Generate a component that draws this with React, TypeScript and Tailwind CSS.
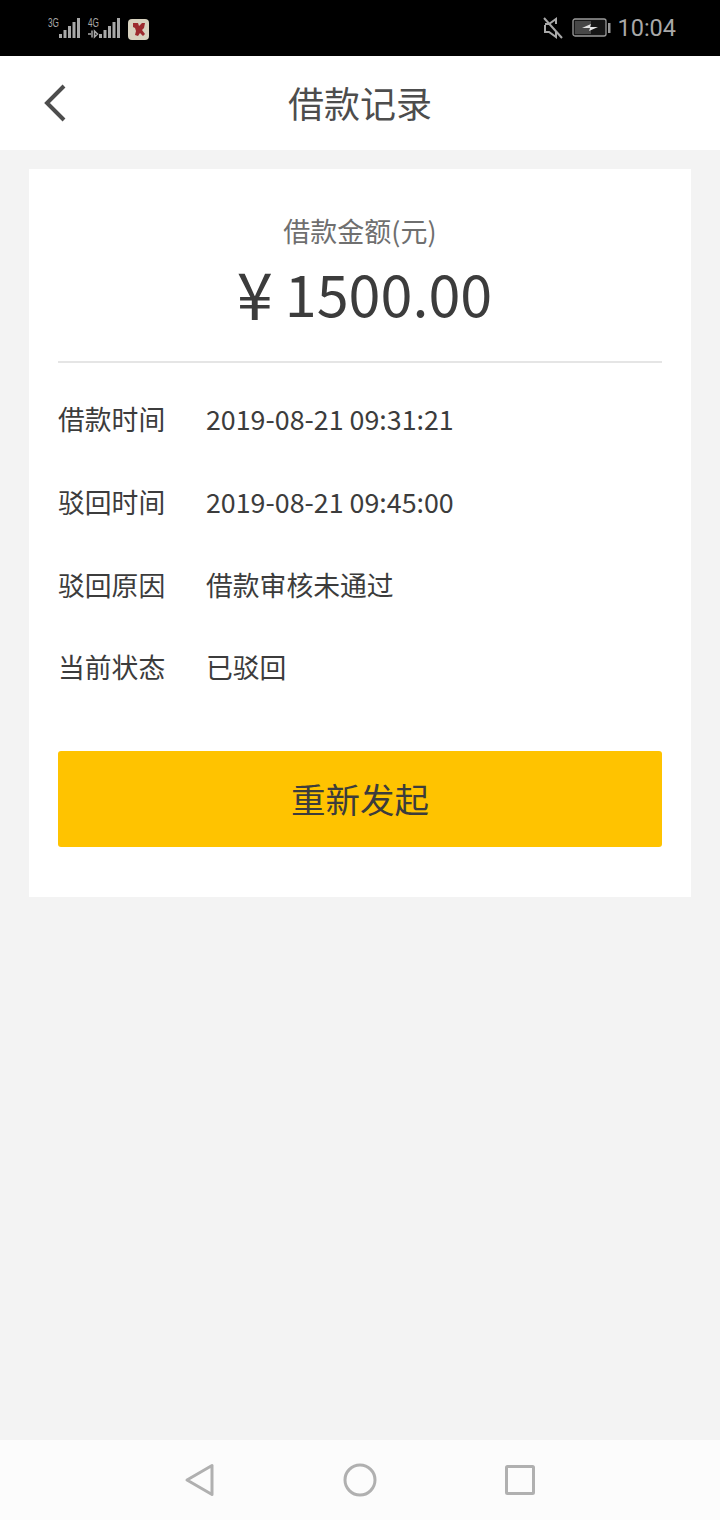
import React from "react";

const cjk = { fontFamily: '"Noto Sans CJK SC", "Noto Sans", sans-serif' };

function Bars({ x }: { x: number }) {
  const hs = [4, 8, 12, 16, 20];
  return (
    <>
      {hs.map((h, i) => (
        <rect key={i} x={x + i * 4.5} y={38 - h} width="3" height={h} fill="#a8a8a8" />
      ))}
    </>
  );
}

function Row({ label, value }: { label: string; value: string }) {
  return (
    <div className="flex h-[82.6px] items-center text-[26.8px] leading-none text-[#3c3c3c]">
      <span className="w-[148px] shrink-0">{label}</span>
      <span>{value}</span>
    </div>
  );
}

export default function App() {
  return (
    <div className="flex h-[1520px] w-[720px] flex-col overflow-hidden bg-[#f3f3f3]" style={cjk}>
      <div className="flex h-[56px] shrink-0 items-center justify-between bg-black pl-[47px] pr-[44px]">
        <svg width="104" height="56" viewBox="47 0 104 56" className="shrink-0">
          <text x="48" y="27" fontSize="12" fill="#a8a8a8" fontFamily="Liberation Sans" textLength="11" lengthAdjust="spacingAndGlyphs">3G</text>
          <Bars x={59} />
          <text x="88" y="27" fontSize="12" fill="#a8a8a8" fontFamily="Liberation Sans" textLength="11" lengthAdjust="spacingAndGlyphs">4G</text>
          <path d="M88 34h3M92 30.500v7M94.500 31v6l3-3z" stroke="#a8a8a8" strokeWidth="1.500" fill="none" />
          <Bars x={99} />
          <rect x="128" y="19" width="21" height="21" rx="4" fill="#d8d2bf" />
          <path d="M133 23h5l1 3 3-3h3l-1 5-2 2 3 4-2 2-3-3-2 3-3-1 1-4-1-3-2-1z" fill="#9c2b2e" />
        </svg>
        <div className="flex items-center">
          <svg width="20" height="22" viewBox="0 0 20 22" className="mr-[9px] shrink-0" fill="none" stroke="#a8a8a8" strokeWidth="2">
            <path d="M1 1l18 20" />
            <path d="M2 7h4l7-5v5M13 14v6l-7-5H2V8" />
          </svg>
          <svg width="40" height="20" viewBox="0 0 40 20" className="mr-[5px] shrink-0">
            <rect x="1" y="1" width="33" height="17" rx="2" fill="#161616" stroke="#9a9a9a" strokeWidth="1.300" />
            <rect x="3" y="3" width="16" height="13" fill="#474747" />
            <path d="M10 10l9-4-1 3h8l-9 4 1-3z" fill="#e4e4e4" />
            <rect x="36" y="5" width="2.500" height="10" fill="#9a9a9a" />
          </svg>
          <span className="translate-y-[1px] text-[23.5px] leading-none text-[#a8a8a8]" style={{ fontFamily: '"Roboto", sans-serif' }}>10:04</span>
        </div>
      </div>

      <div className="relative flex h-[94px] shrink-0 items-center justify-center bg-white pb-[2px]">
        <svg width="26" height="38" viewBox="0 0 26 38" className="absolute left-[42px] top-[28px]" fill="none" stroke="#4d4d4d" strokeWidth="4">
          <path d="M22 2L5 19l17 17" />
        </svg>
        <span className="text-[36px] leading-none text-[#4d4d4d]">借款记录</span>
      </div>

      <div className="flex-1 px-[29px] pt-[19px]">
        <div className="h-[728px] bg-white px-[29px]">
          <div className="flex h-[194px] flex-col items-center border-b-2 border-[#e5e5e5] pt-[48px]">
            <span className="text-[27px] leading-none text-[#6f6f6f]">借款金额(元)</span>
            <span className="mt-[16px] flex items-center pl-[9px] text-[57.5px] leading-none text-[#3c3c3c]">
              <span className="mr-[12px] text-[65px] leading-none">¥</span>
              <span>1500.00</span>
            </span>
          </div>
          <div className="pt-[15.500px]">
            <Row label="借款时间" value="2019-08-21 09:31:21" />
            <Row label="驳回时间" value="2019-08-21 09:45:00" />
            <Row label="驳回原因" value="借款审核未通过" />
            <Row label="当前状态" value="已驳回" />
          </div>
          <button className="mt-[42.500px] flex h-[96px] w-full items-center justify-center rounded-[3px] bg-[#ffc300] pb-[3px] text-[34.500px] leading-none text-[#3c3c3c]">
            重新发起
          </button>
        </div>
      </div>

      <div className="flex h-[80px] shrink-0 items-center justify-center bg-[#fcfcfc]">
        <svg width="360" height="80" viewBox="180 1440 360 80" className="shrink-0" fill="none" stroke="#b0b0b0" strokeWidth="3" strokeLinejoin="round">
          <path d="M212 1465.500v29l-25-14.500z" />
          <circle cx="360" cy="1480" r="15" />
          <rect x="506.500" y="1466.500" width="27" height="27" rx="1" />
        </svg>
      </div>
    </div>
  );
}
